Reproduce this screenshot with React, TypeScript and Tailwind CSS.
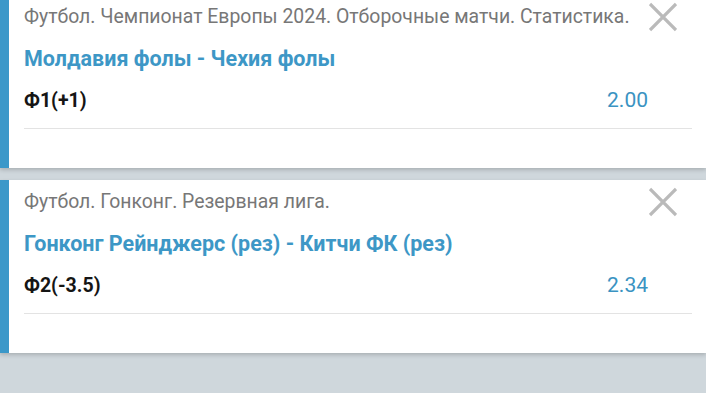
import React from 'react'

interface BetCardProps {
    league: string
    match: string
    bet: string
    odds: string
    first?: boolean
}

function CloseIcon() {
    return (
        <svg width="28" height="30" viewBox="0 0 28 30" className="shrink-0">
            <path d="M1 2 L27 28 M27 2 L1 28" stroke="#bababa" strokeWidth="3.2" fill="none" />
        </svg>
    )
}

function BetCard({ league, match, bet, odds, first = false }: BetCardProps) {
    return (
        <div
            className={
                'flex h-[173px] shrink-0 border-l-[9px] border-[#3b98c9] bg-white shadow-[0_2px_4px_rgba(0,0,0,0.18)] ' +
                (first ? '-mt-[5px]' : '')
            }
        >
            <div className="flex flex-1 flex-col pl-[15px] pr-[14px] pt-[10px]" style={{ fontFamily: 'Roboto, sans-serif' }}>
                {/* league + close */}
                <div className="flex h-[24px] items-center justify-between">
                    <span className="whitespace-nowrap text-[19.4px] leading-6 text-[#777777]">{league}</span>
                    <div className="mr-[15px]">
                        <CloseIcon />
                    </div>
                </div>

                {/* teams */}
                <div className="mt-[17px] text-[21.5px] font-bold leading-[26px] text-[#3d97c6]">{match}</div>

                {/* bet + odds */}
                <div className="mt-[15px] flex h-[28px] items-center justify-between pr-[44px]">
                    <span className="text-[19.5px] font-bold text-[#151515]">{bet}</span>
                    <span className="text-[21px] text-[#3a93c2]">{odds}</span>
                </div>

                <div className="mt-[13px] h-px bg-[#e3e3e3]" />
            </div>
        </div>
    )
}

export default function App() {
    return (
        <div className="flex h-[393px] w-[706px] flex-col gap-[12px] overflow-hidden bg-[#cfd7dc]">
            <BetCard
                first
                league="Футбол. Чемпионат Европы 2024. Отборочные матчи. Статистика."
                match="Молдавия фолы - Чехия фолы"
                bet="Ф1(+1)"
                odds="2.00"
            />
            <BetCard
                league="Футбол. Гонконг. Резервная лига."
                match="Гонконг Рейнджерс (рез) - Китчи ФК (рез)"
                bet="Ф2(-3.5)"
                odds="2.34"
            />
        </div>
    )
}
